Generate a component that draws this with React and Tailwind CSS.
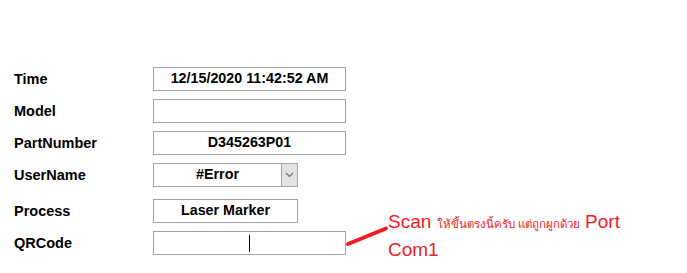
import React from "react";

const Box = ({ w = "w-[193px]", children }) => (
  <div className={`${w} h-[24px] border border-[#a3a3a3] bg-white flex items-center justify-center text-[14.3px] font-bold text-black`}>
    {children}
  </div>
);

const Row = ({ label, children, extra = "" }) => (
  <div className={`flex items-center h-[24px] ${extra}`}>
    <div className="w-[139px] text-[14.5px] font-bold text-black leading-none">{label}</div>
    {children}
  </div>
);

export default function App() {
  return (
    <div
      className="relative w-[687px] h-[273px] bg-white overflow-hidden"
      style={{ fontFamily: '"Liberation Sans", Arial, sans-serif' }}
    >
      <div className="flex flex-col gap-[8px] pt-[67px] pl-[14px]">
        <Row label="Time">
          <Box>12/15/2020 11:42:52 AM</Box>
        </Row>
        <Row label="Model">
          <Box />
        </Row>
        <Row label="PartNumber">
          <Box>D345263P01</Box>
        </Row>
        <Row label="UserName">
          <div className="w-[145px] h-[24px] border border-[#a3a3a3] flex">
            <div className="flex-1 flex items-center justify-center text-[14.3px] font-bold text-black">#Error</div>
            <div className="w-[17px] h-[24px] -my-px -mr-px bg-[#e3e3e3] border border-[#a8a8a8] flex items-center justify-center">
              <svg width="9" height="6" viewBox="0 0 9 6">
                <path d="M1 1 L4.5 4.5 L8 1" fill="none" stroke="#5f6f85" strokeWidth="1.1" />
              </svg>
            </div>
          </div>
        </Row>
        <Row label="Process" extra="mt-[4px]">
          <Box w="w-[145px]">Laser Marker</Box>
        </Row>
        <Row label="QRCode">
          <div className="w-[193px] h-[24px] border border-[#a3a3a3] bg-white flex items-center justify-center">
            <div className="w-px h-[17px] bg-black" />
          </div>
        </Row>
      </div>

      <svg className="absolute left-0 top-0" width="687" height="273" viewBox="0 0 687 273">
        <line x1="348" y1="244" x2="386" y2="228.5" stroke="#ee1c25" strokeWidth="4" strokeLinecap="round" />
      </svg>

      <div className="absolute left-[388px] top-[209px] text-[19px] leading-[25px] text-[#ee1c25] whitespace-nowrap">
        Scan <span className="text-[11.5px]">ให้ขึ้นตรงนี้ครับ แต่ถูกผูกด้วย</span> Port
        <br />
        Com1
      </div>
    </div>
  );
}
